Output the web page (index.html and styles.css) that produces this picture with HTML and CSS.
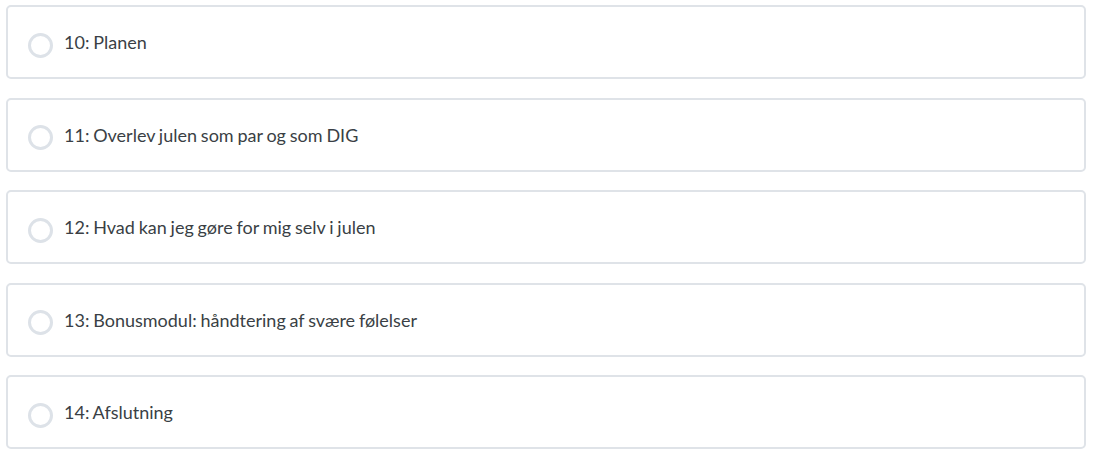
FILE: index.html
```html
<!DOCTYPE html>
<html lang="da">
<head>
<meta charset="utf-8">
<title>Moduler</title>
<link rel="stylesheet" href="styles.css">
</head>
<body>
<ul class="modules">
  <li class="module"><span class="check"></span><span class="title">10: Planen</span></li>
  <li class="module"><span class="check"></span><span class="title">11: Overlev julen som par og som DIG</span></li>
  <li class="module"><span class="check"></span><span class="title">12: Hvad kan jeg gøre for mig selv i julen</span></li>
  <li class="module"><span class="check"></span><span class="title">13: Bonusmodul: håndtering af svære følelser</span></li>
  <li class="module"><span class="check"></span><span class="title">14: Afslutning</span></li>
</ul>
</body>
</html>
```

FILE: styles.css
```css
html, body {
  margin: 0;
  padding: 0;
  background: #ffffff;
}
body {
  font-family: Lato, "Open Sans", "Liberation Sans", sans-serif;
  color: #3a3f45;
}
.modules {
  list-style: none;
  margin: 0;
  padding: 5px 22px 0 6px;
  display: flex;
  flex-direction: column;
  gap: 18.5px;
}
.module {
  box-sizing: border-box;
  height: 74px;
  border: 2px solid #dfe3e8;
  border-radius: 5px;
  display: flex;
  align-items: center;
  padding: 0 0 0 20px;
}
.check {
  box-sizing: border-box;
  width: 25px;
  height: 25px;
  border: 3.5px solid #dde2e8;
  border-radius: 50%;
  flex: none;
  margin-top: 6px;
}
.title {
  margin-left: 11px;
  font-size: 18px;
  line-height: 20px;
  word-spacing: -0.8px;
}
```
